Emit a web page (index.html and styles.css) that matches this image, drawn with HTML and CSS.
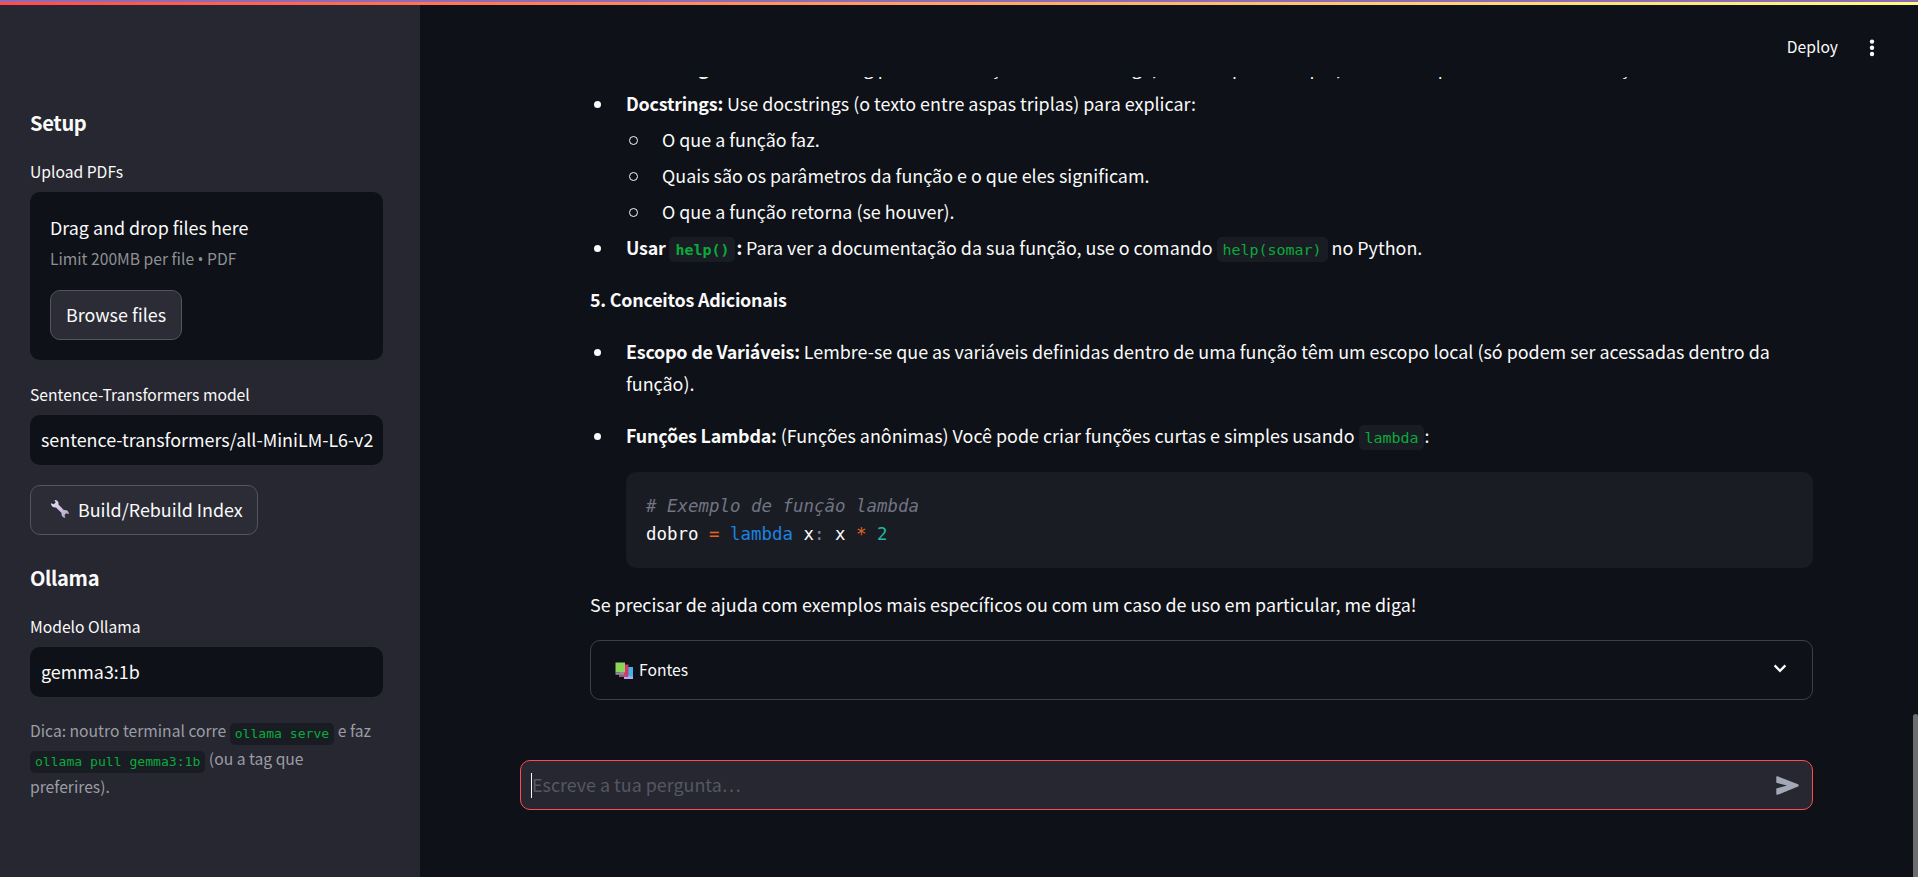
FILE: index.html
```html
<!DOCTYPE html>
<html lang="pt">
<head>
<meta charset="utf-8">
<title>Chat</title>
<link rel="stylesheet" href="styles.css">
</head>
<body>
<div class="rail"></div>
<div class="app">
  <aside class="sidebar">
    <h2 class="heading">Setup</h2>
    <label class="label">Upload PDFs</label>
    <section class="dropzone">
      <div class="drop-title">Drag and drop files here</div>
      <div class="drop-hint">Limit 200MB per file <span class="sep">•</span> PDF</div>
      <button class="button browse">Browse files</button>
    </section>
    <label class="label label-model">Sentence-Transformers model</label>
    <div class="field">sentence-transformers/all-MiniLM-L6-v2</div>
    <button class="button build">
      <svg class="wrench" viewBox="0 0 20 20"><defs><linearGradient id="w" x1="0" y1="0" x2="1" y2="1"><stop offset="0" stop-color="#e4dcef"/><stop offset=".5" stop-color="#d3c2e6"/><stop offset="1" stop-color="#a99bb8"/></linearGradient></defs><path fill="url(#w)" d="M4.500 1C7.300.8 9 3 8.500 5.600L14 11.200c2.600-.5 4.900 1.100 5 4l-2.600-.9-1.900 1.700.9 2.900c-2.700-.1-4.300-2.200-3.800-4.800L6 8.500C3.500 9 1.100 7.300.8 4.300l2.900 1 2-1.700z"/></svg>
      <span>Build/Rebuild Index</span>
    </button>
    <h2 class="heading heading-ollama">Ollama</h2>
    <label class="label">Modelo Ollama</label>
    <div class="field">gemma3:1b</div>
    <p class="caption">Dica: noutro terminal corre <code class="chip">ollama serve</code> e faz <code class="chip">ollama pull gemma3:1b</code> (ou a tag que preferires).</p>
  </aside>
  <main class="main">
    <header class="header">
      <span class="deploy">Deploy</span>
      <svg class="dots" viewBox="0 0 6 18"><circle cx="3" cy="2.600" r="2.200"/><circle cx="3" cy="8.800" r="2.200"/><circle cx="3" cy="15" r="2.200"/></svg>
    </header>
    <div class="scroll">
      <div class="message">
        <ul class="list first">
          <li class="nowrap"><b>Docstring:</b> Use uma docstring para cada função com um código, ideia do passo ao par, e os dados por via da documentação.</li>
          <li><b>Docstrings:</b> Use docstrings (o texto entre aspas triplas) para explicar:
            <ul class="list sub">
              <li>O que a função faz.</li>
              <li>Quais são os parâmetros da função e o que eles significam.</li>
              <li>O que a função retorna (se houver).</li>
            </ul>
          </li>
          <li><b>Usar <code class="chip">help()</code><span class="colon">:</span></b> Para ver a documentação da sua função, use o comando <code class="chip">help(somar)</code> no Python.</li>
        </ul>
        <p class="para"><b>5. Conceitos Adicionais</b></p>
        <ul class="list loose">
          <li><b>Escopo de Variáveis:</b> Lembre-se que as variáveis definidas dentro de uma função têm um escopo local (só podem ser acessadas dentro da função).</li>
          <li><b>Funções Lambda:</b> (Funções anônimas) Você pode criar funções curtas e simples usando <code class="chip">lambda</code>:</li>
        </ul>
        <pre class="code"><span class="c"># Exemplo de função lambda</span>
dobro <span class="o">=</span> <span class="k">lambda</span> x<span class="p">:</span> x <span class="o">*</span> <span class="n">2</span></pre>
        <p class="para closing">Se precisar de ajuda com exemplos mais específicos ou com um caso de uso em particular, me diga!</p>
        <div class="expander">
          <svg class="books" viewBox="0 0 18 17"><path fill="#3fb6ea" d="M9 5h9v11H9z"/><path fill="#b9a8e8" d="M9 14.500h9V17H9z"/><path fill="#e02f6b" d="M5 2.500h8.500v11H5z"/><path fill="#a8507e" d="M4 12.500h9V15H4z"/><path fill="#8bd45c" d="M.5.5h9.500v10H.5z"/><path fill="#8a8fa0" d="M.5 10.500H9v2.300H.5z"/></svg>
          <span class="expander-title">Fontes</span>
          <svg class="chevron" viewBox="0 0 14 9"><path d="M1.600 1.400 7 6.800l5.400-5.400" fill="none" stroke="#fafafa" stroke-width="2.300"/></svg>
        </div>
      </div>
    </div>
    <div class="chat-input">
      <span class="caret"></span>
      <span class="placeholder">Escreve a tua pergunta…</span>
      <svg class="send" viewBox="0 0 23 19"><path fill="#a3a8b8" d="M1.600.3 22 8.300c1 .4 1 1.900 0 2.300L1.600 18.800C.9 19 .3 18.600.3 17.900v-5.500L11 9.500.3 6.800V1.200C.3.500.9 0 1.600.3z"/></svg>
    </div>
  </main>
  <div class="scrollbar"></div>
</div>
</body>
</html>
```
FILE: styles.css
```css
* { box-sizing: border-box; }
body {
  margin: 0;
  height: 877px;
  overflow: hidden;
  background: #0e1117;
  color: #fafafa;
  font-family: "Noto Sans CJK SC", "Noto Sans CJK JP", "Open Sans", sans-serif;
  font-size: 17.9px;
  line-height: 32px;
}
h2, p, ul, pre { margin: 0; padding: 0; }
b { font-weight: 700; letter-spacing: -0.22px; }
.rail {
  height: 5px;
  border-top: 2px solid #906bb5;
  background: linear-gradient(to right, #ff4b4b, #ffff80);
}
.app { display: flex; height: 872px; }

.sidebar {
  width: 420px;
  flex: none;
  padding: 104px 37px 0 30px;
  background: #262730;
}
.heading { height: 28px; font-size: 20.1px; line-height: 28px; font-weight: 700; letter-spacing: -0.35px; }
.label { display: block; height: 28px; margin-top: 21px; font-size: 15.66px; line-height: 28px; }
.dropzone {
  height: 168px;
  margin-top: 6px;
  padding: 20px;
  border-radius: 10px;
  background: #0e1117;
}
.drop-title { height: 33px; line-height: 31px; }
.drop-hint { height: 28px; font-size: 15.66px; line-height: 28px; color: #8f9094; white-space: nowrap; }
.sep { font-family: "Open Sans", sans-serif; }
.button {
  display: flex;
  align-items: center;
  height: 50px;
  padding: 0 15px 2px;
  border: 1px solid #53545c;
  border-radius: 10px;
  background: #2b2c36;
  color: #fafafa;
  font: inherit;
}
.browse { width: 132px; margin-top: 17px; white-space: nowrap; }
.label-model { margin-top: 21px; }
.field {
  height: 50px;
  margin-top: 6px;
  padding: 0 11px;
  border-radius: 10px;
  background: #0e1117;
  line-height: 48px;
  white-space: nowrap;
  overflow: hidden;
}
.build { width: 228px; margin-top: 20px; padding-left: 19px; gap: 8px; white-space: nowrap; }
.wrench { width: 20px; height: 20px; flex: none; }
.heading-ollama { margin-top: 29px; }
.caption { margin-top: 20px; font-size: 15.66px; line-height: 28px; color: #9c9da5; }

.chip {
  display: inline-block;
  height: 25px;
  padding: 2px 6px 0;
  border-radius: 5px;
  background: #1a1c24;
  color: #09ab3b;
  font-family: "DejaVu Sans Mono", monospace;
  font-size: 14.95px;
  line-height: 23px;
  letter-spacing: 0;
  vertical-align: 0;
  margin-bottom: -4px;
}
.colon { margin-left: 1px; }
.caption .chip { height: 22px; padding: 0 5px; font-size: 13.08px; line-height: 22px; vertical-align: -1px; }

.main { width: 1493px; flex: none; display: flex; flex-direction: column; padding: 0 100px; }
.header {
  display: flex;
  justify-content: flex-end;
  align-items: center;
  height: 72px;
  margin-right: -62px;
}
.deploy { font-size: 15.66px; margin: 12px 31px 0 0; }
.dots { width: 6px; height: 18px; fill: #fafafa; margin-top: 14px; }
.scroll { height: 683px; overflow: hidden; }
.message { padding-left: 70px; }
.list { list-style: none; padding-left: 36px; }
.list li { margin-bottom: 4px; }
.nowrap { white-space: nowrap; }
.first { margin-top: -26px; }
.list li::before {
  content: "";
  display: inline-block;
  width: 7px;
  height: 7px;
  margin: 0 25px 0 -32px;
  border-radius: 50%;
  background: #fafafa;
  vertical-align: 3px;
}
.list .sub { margin-top: 4px; }
.list .sub li::before {
  box-sizing: border-box;
  width: 9px;
  height: 9px;
  margin: 0 24px 0 -33px;
  border: 1px solid #fafafa;
  background: none;
  vertical-align: 2px;
}
.para { margin-top: 20px; height: 32px; }
.loose { margin-top: 20px; }
.loose li { margin-bottom: 20px; }
.code {
  height: 96px;
  margin: 0 0 0 36px;
  padding: 20px;
  border-radius: 10px;
  background: #1a1c24;
  font-family: "DejaVu Sans Mono", monospace;
  font-size: 17.44px;
  line-height: 28px;
}
.c { color: #717482; font-style: italic; }
.o { color: #e8651c; }
.k { color: #1c83e1; }
.p { color: #808495; }
.n { color: #21b8a0; }
.loose + .code { margin-top: 21px; }
.closing { margin-top: 20px; }
.expander {
  display: flex;
  align-items: center;
  height: 60px;
  margin-top: 20px;
  padding: 0 25px 0 24px;
  border: 1px solid #3e4045;
  border-radius: 10px;
}
.books { width: 18px; height: 17px; }
.expander-title { flex: 1; margin-left: 6px; font-size: 15.66px; line-height: 28px; }
.chevron { width: 14px; height: 9px; margin-top: -4px; }
.chat-input {
  display: flex;
  align-items: center;
  height: 50px;
  padding: 0 13px 0 10px;
  border: 1px solid #ff4b4b;
  border-radius: 10px;
  background: #262730;
}
.caret { width: 1px; height: 25px; background: #fafafa; }
.placeholder { flex: 1; color: #555763; margin-top: -2px; }
.send { width: 23px; height: 19px; }
.scrollbar { width: 5px; margin-top: 709px; border-radius: 3px 3px 0 0; background: #6c6d70; }
```
